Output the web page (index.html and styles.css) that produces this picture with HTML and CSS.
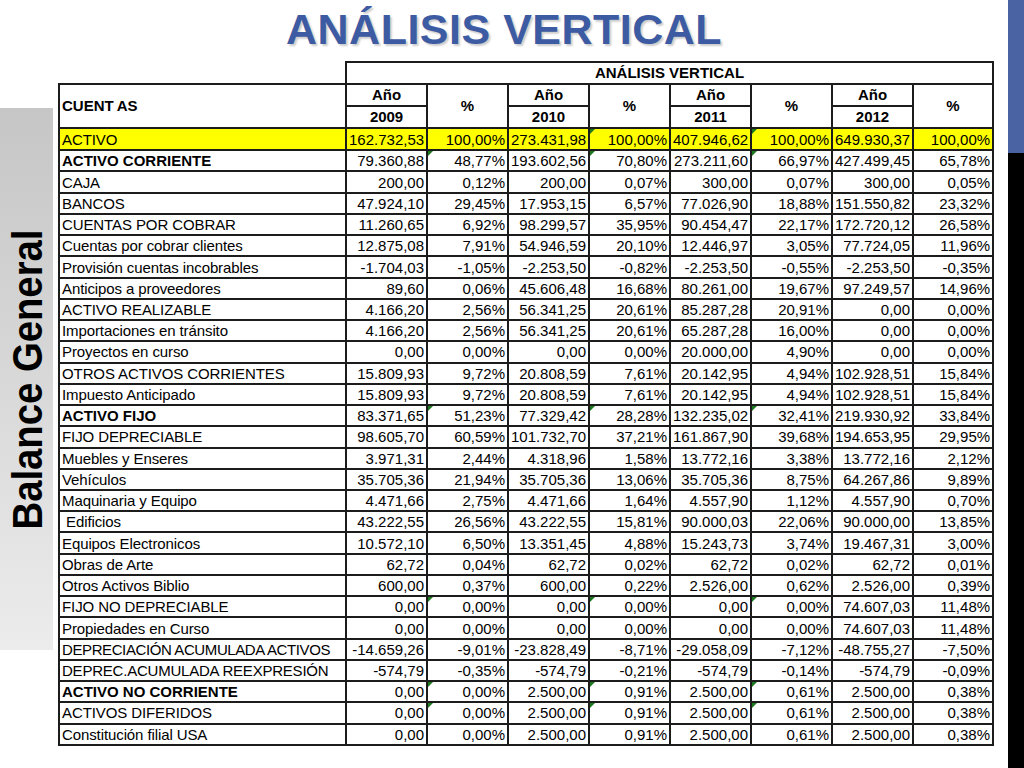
FILE: index.html
```html
<!DOCTYPE html>
<html lang="es">
<head>
<meta charset="utf-8">
<title>Análisis Vertical</title>
<link rel="stylesheet" href="styles.css">
</head>
<body>
<div class="slide">
  <div class="side">
    <div class="side-panel"><span class="side-label">Balance General</span></div>
  </div>
  <div class="main">
    <h1 class="title">ANÁLISIS VERTICAL</h1>
    <table class="sheet">
      <colgroup>
        <col class="c-name"><col class="c-num"><col class="c-num"><col class="c-num"><col class="c-num"><col class="c-num"><col class="c-num"><col class="c-num"><col class="c-last">
      </colgroup>
      <thead>
        <tr class="hrow">
          <td class="blank"></td>
          <td class="hcell" colspan="8">ANÁLISIS VERTICAL</td>
        </tr>
        <tr class="hrow">
          <td class="hname" rowspan="2">CUENT<span class="kern">AS</span></td>
          <td class="hcell">Año</td>
          <td class="hcell" rowspan="2">%</td>
          <td class="hcell">Año</td>
          <td class="hcell" rowspan="2">%</td>
          <td class="hcell">Año</td>
          <td class="hcell" rowspan="2">%</td>
          <td class="hcell">Año</td>
          <td class="hcell" rowspan="2">%</td>
        </tr>
        <tr class="hrow">
          <td class="hcell">2009</td>
          <td class="hcell">2010</td>
          <td class="hcell">2011</td>
          <td class="hcell">2012</td>
        </tr>
      </thead>
      <tbody>
        <tr class="hl"><td>ACTIVO</td><td>162.732,53</td><td>100,00%</td><td>273.431,98</td><td class="e">100,00%</td><td>407.946,62</td><td class="e">100,00%</td><td>649.930,37</td><td>100,00%</td></tr>
        <tr><td class="b">ACTIVO CORRIENTE</td><td>79.360,88</td><td class="e">48,77%</td><td>193.602,56</td><td class="e">70,80%</td><td>273.211,60</td><td class="e">66,97%</td><td>427.499,45</td><td>65,78%</td></tr>
        <tr><td>CAJA</td><td>200,00</td><td>0,12%</td><td>200,00</td><td>0,07%</td><td>300,00</td><td>0,07%</td><td>300,00</td><td>0,05%</td></tr>
        <tr><td>BANCOS</td><td>47.924,10</td><td>29,45%</td><td>17.953,15</td><td>6,57%</td><td>77.026,90</td><td>18,88%</td><td>151.550,82</td><td>23,32%</td></tr>
        <tr><td>CUENTAS POR COBRAR</td><td>11.260,65</td><td>6,92%</td><td>98.299,57</td><td>35,95%</td><td>90.454,47</td><td>22,17%</td><td>172.720,12</td><td>26,58%</td></tr>
        <tr><td>Cuentas por cobrar clientes</td><td>12.875,08</td><td>7,91%</td><td>54.946,59</td><td>20,10%</td><td>12.446,97</td><td>3,05%</td><td>77.724,05</td><td>11,96%</td></tr>
        <tr><td>Provisión cuentas incobrables</td><td>-1.704,03</td><td>-1,05%</td><td>-2.253,50</td><td>-0,82%</td><td>-2.253,50</td><td>-0,55%</td><td>-2.253,50</td><td>-0,35%</td></tr>
        <tr><td>Anticipos a proveedores</td><td>89,60</td><td>0,06%</td><td>45.606,48</td><td>16,68%</td><td>80.261,00</td><td>19,67%</td><td>97.249,57</td><td>14,96%</td></tr>
        <tr><td>ACTIVO REALIZABLE</td><td>4.166,20</td><td>2,56%</td><td>56.341,25</td><td>20,61%</td><td>85.287,28</td><td>20,91%</td><td>0,00</td><td>0,00%</td></tr>
        <tr><td>Importaciones en tránsito</td><td>4.166,20</td><td>2,56%</td><td>56.341,25</td><td>20,61%</td><td>65.287,28</td><td>16,00%</td><td>0,00</td><td>0,00%</td></tr>
        <tr><td>Proyectos en curso</td><td>0,00</td><td>0,00%</td><td>0,00</td><td>0,00%</td><td>20.000,00</td><td>4,90%</td><td>0,00</td><td>0,00%</td></tr>
        <tr><td>OTROS ACTIVOS CORRIENTES</td><td>15.809,93</td><td>9,72%</td><td>20.808,59</td><td>7,61%</td><td>20.142,95</td><td>4,94%</td><td>102.928,51</td><td>15,84%</td></tr>
        <tr><td>Impuesto Anticipado</td><td>15.809,93</td><td>9,72%</td><td>20.808,59</td><td>7,61%</td><td>20.142,95</td><td>4,94%</td><td>102.928,51</td><td>15,84%</td></tr>
        <tr><td class="b">ACTIVO FIJO</td><td>83.371,65</td><td class="e">51,23%</td><td>77.329,42</td><td class="e">28,28%</td><td>132.235,02</td><td class="e">32,41%</td><td>219.930,92</td><td>33,84%</td></tr>
        <tr><td>FIJO DEPRECIABLE</td><td>98.605,70</td><td>60,59%</td><td>101.732,70</td><td>37,21%</td><td>161.867,90</td><td>39,68%</td><td>194.653,95</td><td>29,95%</td></tr>
        <tr><td>Muebles y Enseres</td><td>3.971,31</td><td>2,44%</td><td>4.318,96</td><td>1,58%</td><td>13.772,16</td><td>3,38%</td><td>13.772,16</td><td>2,12%</td></tr>
        <tr><td>Vehículos</td><td>35.705,36</td><td>21,94%</td><td>35.705,36</td><td>13,06%</td><td>35.705,36</td><td>8,75%</td><td>64.267,86</td><td>9,89%</td></tr>
        <tr><td>Maquinaria y Equipo</td><td>4.471,66</td><td>2,75%</td><td>4.471,66</td><td>1,64%</td><td>4.557,90</td><td>1,12%</td><td>4.557,90</td><td>0,70%</td></tr>
        <tr><td class="ind">Edificios</td><td>43.222,55</td><td>26,56%</td><td>43.222,55</td><td>15,81%</td><td>90.000,03</td><td>22,06%</td><td>90.000,00</td><td>13,85%</td></tr>
        <tr><td>Equipos Electronicos</td><td>10.572,10</td><td>6,50%</td><td>13.351,45</td><td>4,88%</td><td>15.243,73</td><td>3,74%</td><td>19.467,31</td><td>3,00%</td></tr>
        <tr><td>Obras de Arte</td><td>62,72</td><td>0,04%</td><td>62,72</td><td>0,02%</td><td>62,72</td><td>0,02%</td><td>62,72</td><td>0,01%</td></tr>
        <tr><td>Otros Activos Biblio</td><td>600,00</td><td>0,37%</td><td>600,00</td><td>0,22%</td><td>2.526,00</td><td>0,62%</td><td>2.526,00</td><td>0,39%</td></tr>
        <tr><td>FIJO NO DEPRECIABLE</td><td>0,00</td><td class="e">0,00%</td><td>0,00</td><td class="e">0,00%</td><td>0,00</td><td class="e">0,00%</td><td>74.607,03</td><td>11,48%</td></tr>
        <tr><td>Propiedades en Curso</td><td>0,00</td><td>0,00%</td><td>0,00</td><td>0,00%</td><td>0,00</td><td>0,00%</td><td>74.607,03</td><td>11,48%</td></tr>
        <tr><td class="tight2">DEPRECIACIÓN ACUMULADA ACTIVOS</td><td>-14.659,26</td><td>-9,01%</td><td>-23.828,49</td><td>-8,71%</td><td>-29.058,09</td><td>-7,12%</td><td>-48.755,27</td><td>-7,50%</td></tr>
        <tr><td class="tight1">DEPREC.ACUMULADA REEXPRESIÓN</td><td>-574,79</td><td>-0,35%</td><td>-574,79</td><td>-0,21%</td><td>-574,79</td><td>-0,14%</td><td>-574,79</td><td>-0,09%</td></tr>
        <tr><td class="b">ACTIVO NO CORRIENTE</td><td>0,00</td><td class="e">0,00%</td><td>2.500,00</td><td class="e">0,91%</td><td>2.500,00</td><td class="e">0,61%</td><td>2.500,00</td><td>0,38%</td></tr>
        <tr><td>ACTIVOS DIFERIDOS</td><td>0,00</td><td class="e">0,00%</td><td>2.500,00</td><td class="e">0,91%</td><td>2.500,00</td><td class="e">0,61%</td><td>2.500,00</td><td>0,38%</td></tr>
        <tr><td>Constitución filial USA</td><td>0,00</td><td>0,00%</td><td>2.500,00</td><td>0,91%</td><td>2.500,00</td><td>0,61%</td><td>2.500,00</td><td>0,38%</td></tr>
      </tbody>
    </table>
  </div>
  <div class="rightbar">
    <div class="rightbar-top"></div>
    <div class="rightbar-bottom"></div>
  </div>
</div>
</body>
</html>
```

FILE: styles.css
```css
* { box-sizing: border-box; }
html, body { margin: 0; padding: 0; background: #fff; }
body { font-family: "Liberation Sans", Arial, sans-serif; color: #000; }

.slide {
  display: flex;
  width: 1024px;
  height: 768px;
  overflow: hidden;
  background: #fff;
}

/* left grey strip with rotated caption */
.side { width: 53px; flex: none; padding-top: 108px; }
.side-panel {
  height: 542px;
  background: linear-gradient(to bottom, #c6c6c6 0%, #d8d8d8 50%, #ececec 100%);
  display: flex;
  align-items: center;
  justify-content: center;
}
.side-label {
  display: inline-block;
  flex: none;
  white-space: nowrap;
  font-size: 43px;
  line-height: 43px;
  font-weight: bold;
  color: #000;
  transform: translateX(1px) rotate(-90deg) scaleX(0.89);
}

/* main column */
.main { flex: 1; padding-left: 5px; }
.title {
  margin: 0;
  height: 62px;
  padding: 7px 0 0 228px;
  font-size: 43px;
  line-height: 44px;
  font-weight: bold;
  letter-spacing: 0.5px;
  color: #3d5ba3;
  text-shadow: 2px 2px 2px rgba(0, 0, 0, 0.2);
  white-space: nowrap;
}

/* right decorative bar */
.rightbar { width: 16px; flex: none; display: flex; flex-direction: column; }
.rightbar-top { height: 153px; background: #4a63a3; }
.rightbar-bottom { flex: 1; background: #000; }

/* spreadsheet */
.sheet {
  border-collapse: collapse;
  table-layout: fixed;
  width: 934px;
  font-size: 15px;
  margin-top: -1px;
}
.c-name { width: 287px; }
.c-num { width: 81px; }
.c-last { width: 80px; }

.sheet td {
  border: 2px solid #1c1c1c;
  padding: 0 2px;
  line-height: 17px;
  white-space: nowrap;
  overflow: hidden;
  position: relative;
  text-align: right;
  vertical-align: middle;
}
.sheet td:first-child { text-align: left; padding-left: 2px; letter-spacing: -0.1px; }

.hrow { height: 22px; }
.sheet tbody tr { height: 21.24px; }
.sheet tbody tr:first-child { height: 22.24px; }

.sheet thead td { padding-bottom: 2px; }
.sheet td.blank { border: none; }
.sheet td.hcell { text-align: center; font-weight: bold; }
.sheet td.hname { font-weight: bold; text-align: left; letter-spacing: 0; }
.kern { margin-left: 3px; }

.hl td { background: #ffff00; }
.sheet td.b { font-weight: bold; letter-spacing: 0; }
.sheet td.ind { padding-left: 6px; }
.sheet td.tight1 { letter-spacing: -0.22px; }
.sheet td.tight2 { letter-spacing: -0.4px; }

/* excel error indicator */
.sheet td.e::before {
  content: "";
  position: absolute;
  left: 0;
  top: 0;
  width: 0;
  height: 0;
  border-top: 5px solid #1e7a1e;
  border-right: 5px solid transparent;
}
```
